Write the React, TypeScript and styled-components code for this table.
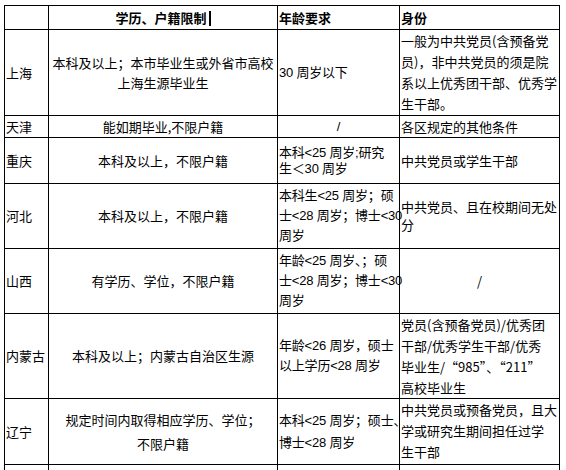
import React from "react";
import styled, { createGlobalStyle } from "styled-components";

type Align = "left" | "center";

interface Row {
  region: string;
  height: number;
  edu: string[];
  eduLh?: number;
  eduTop?: boolean;
  age: string[];
  ageLh?: number;
  ageAlign?: Align;
  role: string[];
  roleLh?: number;
  roleAlign?: Align;
  roleTop?: boolean;
}

const rows: Row[] = [
  {
    region: "上海",
    height: 86,
    edu: ["本科及以上；本市毕业生或外省市高校", "上海生源毕业生"],
    age: ["30 周岁以下"],
    role: ["一般为中共党员(含预备党", "员)，非中共党员的须是院", "系以上优秀团干部、优秀学", "生干部。"],
    roleLh: 21,
    roleTop: true,
  },
  {
    region: "天津",
    height: 22,
    edu: ["能如期毕业,不限户籍"],
    age: ["/"],
    ageAlign: "center",
    role: ["各区规定的其他条件"],
  },
  {
    region: "重庆",
    height: 46,
    edu: ["本科及以上，不限户籍"],
    age: ["本科<25 周岁;研究", "生＜30 周岁"],
    ageLh: 16,
    role: ["中共党员或学生干部"],
  },
  {
    region: "河北",
    height: 65,
    edu: ["本科及以上，不限户籍"],
    age: ["本科生<25 周岁；硕", "士<28 周岁；博士<30", "周岁"],
    ageLh: 20,
    role: ["中共党员、且在校期间无处", "分"],
    roleLh: 18,
  },
  {
    region: "山西",
    height: 65,
    edu: ["有学历、学位，不限户籍"],
    age: ["年龄<25 周岁、；硕", "士<28 周岁；博士<30", "周岁"],
    ageLh: 20,
    role: ["/"],
    roleAlign: "center",
  },
  {
    region: "内蒙古",
    height: 85,
    edu: ["本科及以上；内蒙古自治区生源"],
    age: ["年龄<26 周岁，硕士", "以上学历<28 周岁"],
    ageLh: 20,
    role: ["党员(含预备党员)/优秀团", "干部/优秀学生干部/优秀", "毕业生/“985”、“211”", "高校毕业生"],
    roleLh: 21,
    roleTop: true,
  },
  {
    region: "辽宁",
    height: 66,
    edu: ["规定时间内取得相应学历、学位；", "不限户籍"],
    eduLh: 24,
    age: ["本科<25 周岁；硕士、", "博士<28 周岁"],
    ageLh: 22,
    role: ["中共党员或预备党员，且大", "学或研究生期间担任过学", "生干部"],
    roleLh: 21,
    roleTop: true,
  },
  {
    region: "吉林",
    height: 66,
    edu: ["本科及以上；吉林生源或在吉林省高校就读", "毕业生，不限户籍"],
    eduLh: 22,
    eduTop: true,
    age: ["本科<25 周岁；硕士", "<28 周岁"],
    ageLh: 22,
    role: ["中共党员或预备党员"],
  },
];

const Lines = ({ lines }: { lines: string[] }) => (
  <>
    {lines.map((line, i) => (
      <React.Fragment key={i}>
        {i > 0 && <br />}
        {line}
      </React.Fragment>
    ))}
  </>
);

export default function App() {
  return (
    <>
      <GlobalStyle />
      <Page>
        <Table>
          <colgroup>
            <col style={{ width: 44 }} />
            <col style={{ width: 229 }} />
            <col style={{ width: 122 }} />
            <col style={{ width: 160 }} />
          </colgroup>
          <thead>
            <HeadRow>
              <HeadCell />
              <HeadCell $align="center">
                学历、户籍限制
                <Caret />
              </HeadCell>
              <HeadCell>年龄要求</HeadCell>
              <HeadCell>身份</HeadCell>
            </HeadRow>
          </thead>
          <tbody>
            {rows.map((row) => (
              <BodyRow key={row.region} $h={row.height}>
                <Cell>{row.region}</Cell>
                <Cell $align="center" $lh={row.eduLh} $top={row.eduTop}>
                  <Lines lines={row.edu} />
                </Cell>
                <AgeCell $align={row.ageAlign} $lh={row.ageLh}>
                  <Lines lines={row.age} />
                </AgeCell>
                <Cell $align={row.roleAlign} $lh={row.roleLh} $top={row.roleTop}>
                  <Lines lines={row.role} />
                </Cell>
              </BodyRow>
            ))}
          </tbody>
        </Table>
      </Page>
    </>
  );
}

const GlobalStyle = createGlobalStyle`
  html, body {
    margin: 0;
    background: #fff;
    overflow: hidden;
  }
  body {
    font-family: "Noto Sans CJK SC", "Noto Sans", sans-serif;
    color: #000;
  }
`;

const Page = styled.div`
  padding: 5px 0 0 4px;
`;

const Table = styled.table`
  border-collapse: collapse;
  table-layout: fixed;
  width: 556px;
`;

const HeadRow = styled.tr`
  height: 24px;
`;

const BodyRow = styled.tr<{ $h: number }>`
  height: ${(p) => p.$h}px;
`;

const Cell = styled.td<{ $align?: Align; $lh?: number; $top?: boolean }>`
  border: 1px solid #000;
  padding: 0 1px;
  font-size: 13px;
  line-height: ${(p) => p.$lh ?? 20}px;
  text-align: ${(p) => p.$align ?? "left"};
  vertical-align: ${(p) => (p.$top ? "top" : "middle")};
  white-space: nowrap;
  overflow: visible;
`;

const AgeCell = styled(Cell)`
  font-family: "Liberation Sans", "Noto Sans CJK SC", sans-serif;
  letter-spacing: -0.2px;
`;

const HeadCell = styled.th<{ $align?: Align }>`
  border: 1px solid #000;
  padding: 0 1px;
  font-size: 13px;
  font-weight: 700;
  line-height: 20px;
  text-align: ${(p) => p.$align ?? "left"};
  vertical-align: middle;
  white-space: nowrap;
`;

const Caret = styled.span`
  display: inline-block;
  width: 2px;
  height: 15px;
  margin-left: 2px;
  background: #000;
  vertical-align: -3px;
`;
